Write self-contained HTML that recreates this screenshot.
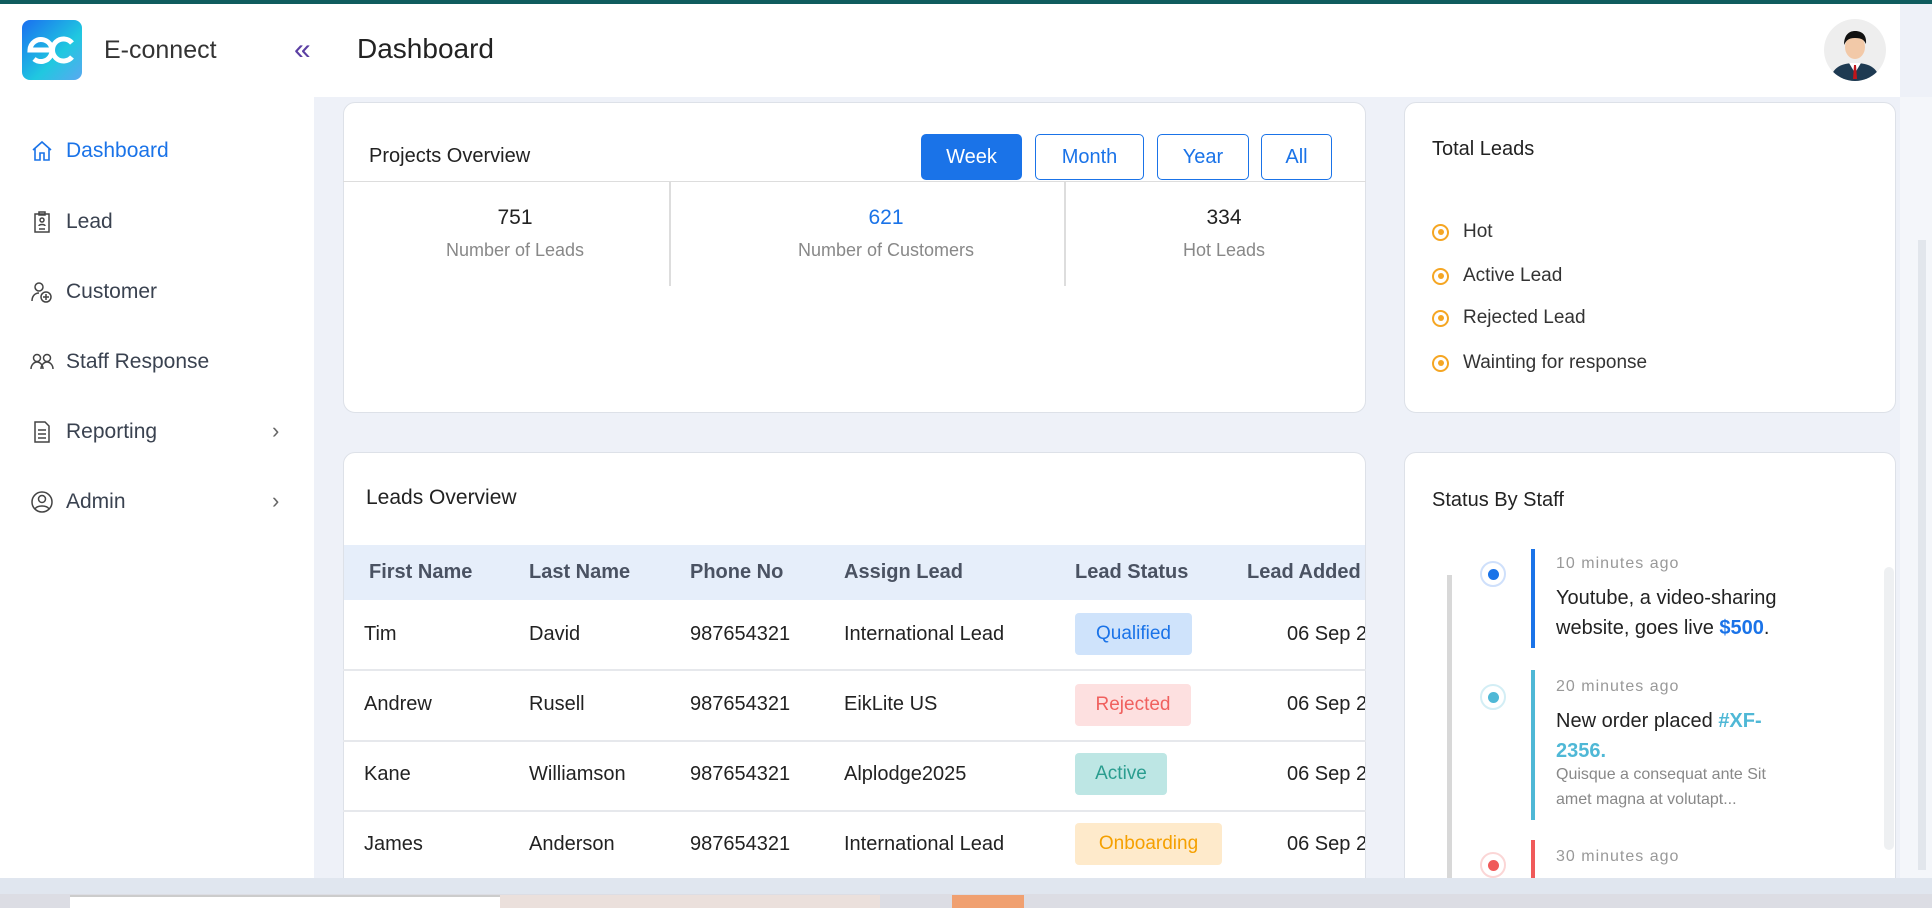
<!DOCTYPE html>
<html style="width:1932px;height:908px;overflow:hidden"><head><meta charset="utf-8"><style>
*{box-sizing:border-box;margin:0;padding:0}
body{width:1932px;height:908px;overflow:hidden;background:#eef1f8;font-family:"Liberation Sans",sans-serif;position:relative;color:#222}
.abs{position:absolute}
.topline{left:0;top:0;width:1932px;height:4px;background:#0f5c5e}
.header{left:0;top:4px;width:1900px;height:93px;background:#fff}
.sidebar{left:0;top:97px;width:314px;height:781px;background:#fff}
.menu{position:absolute;left:30px;font-size:21px;color:#3a4250;display:flex;align-items:center;gap:12px}
.menu svg{width:24px;height:24px}
.chev{position:absolute;left:272px;font-size:22px;color:#666}
.card{position:absolute;background:#fff;border:1px solid #dde1e8;border-radius:12px}
.btn{position:absolute;top:134px;height:46px;border:1.5px solid #1a73e8;border-radius:5px;color:#1a73e8;font-size:20px;display:flex;align-items:center;justify-content:center}
.stat{position:absolute;text-align:center;width:300px}
.stat .n{font-size:21px;color:#222}
.stat .l{font-size:18px;color:#888;margin-top:10px}
.li{position:absolute;left:1432px;font-size:19px;color:#333;display:flex;align-items:center;gap:14px}
.ring{width:17px;height:17px;border:2.5px solid #f5a623;border-radius:50%;display:flex;align-items:center;justify-content:center}
.ring i{width:6px;height:6px;background:#f5a623;border-radius:50%}
.th{position:absolute;top:561px;font-size:20px;color:#4a5262;font-weight:bold}
.td{position:absolute;font-size:20px;color:#222}
.badge{position:absolute;left:1075px;height:42px;border-radius:4px;font-size:19px;display:flex;align-items:center;justify-content:center}
.sep{position:absolute;left:343px;width:1023px;height:2px;background:#e6e8ec}
.dot{position:absolute;left:1480px;width:26px;height:26px;border-radius:50%;border:2px solid;display:flex;align-items:center;justify-content:center}
.dot i{width:11px;height:11px;border-radius:50%}
.bar{position:absolute;left:1531px;width:4px}
.tm{position:absolute;left:1556px;font-size:16px;color:#999;letter-spacing:1px}
.tx{position:absolute;left:1556px;font-size:20px;color:#222;line-height:30px;width:290px}
</style></head><body>
<div class="abs topline"></div>
<div class="abs header"></div>
<div class="abs" style="left:22px;top:20px;width:60px;height:60px;border-radius:8px;background:linear-gradient(135deg,#1a6ff0,#20c8e0 60%,#5aa8f0)">
<svg width="60" height="60" viewBox="0 0 60 60"><path d="M30 30H8a11 11 0 1 1 4 9" fill="none" stroke="#fff" stroke-width="5"/><path d="M50 23a11 11 0 1 0 0 14" fill="none" stroke="#fff" stroke-width="5"/></svg></div>
<div class="abs" style="left:104px;top:36px;font-size:25px;color:#333">E-connect</div>
<div class="abs" style="left:294px;top:33px;font-size:30px;color:#5b3fa3">«</div>
<div class="abs" style="left:357px;top:33px;font-size:28px;color:#222">Dashboard</div>
<div class="abs" style="left:1824px;top:19px;width:62px;height:62px;border-radius:50%;background:#eee;overflow:hidden">
<svg width="62" height="62" viewBox="0 0 62 62"><path d="M6 62c2-14 12-18 25-18s23 4 25 18z" fill="#1e3a52"/><path d="M25 44l6 10 6-10z" fill="#fff"/><path d="M30 46h2l1 14h-4z" fill="#c0151b"/><ellipse cx="31" cy="28" rx="10" ry="12" fill="#f2c9a8"/><path d="M20 26c0-10 5-14 11-14s12 3 11 13c-2-4-4-6-11-6s-9 3-11 7z" fill="#111"/></svg></div>
<div class="abs sidebar"></div>
<div class="menu" style="top:139px;color:#1a73e8"><svg viewBox="0 0 24 24" fill="none" stroke="#1a73e8" stroke-width="1.6"><path d="M3 11L12 3l9 8M5 9v12h5v-7h4v7h5V9"/></svg>Dashboard</div>
<div class="menu" style="top:210px"><svg viewBox="0 0 24 24" fill="none" stroke="#444" stroke-width="1.5"><rect x="5" y="4" width="14" height="18"/><rect x="9" y="2" width="6" height="3"/><circle cx="12" cy="10" r="2"/><path d="M9 16c0-2 6-2 6 0M9 19h6"/></svg>Lead</div>
<div class="menu" style="top:280px"><svg viewBox="0 0 24 24" fill="none" stroke="#444" stroke-width="1.5"><circle cx="9" cy="7" r="4"/><path d="M2 21c0-5 3-8 7-8"/><circle cx="16" cy="17" r="5"/><path d="M16 14v6M13 17h6"/></svg>Customer</div>
<div class="menu" style="top:350px"><svg viewBox="0 0 24 24" fill="none" stroke="#444" stroke-width="1.5"><circle cx="7" cy="8" r="3.5"/><circle cx="17" cy="8" r="3.5"/><path d="M1 19c0-4 3-7 6-7s6 3 6 7M11 19c0-4 3-7 6-7s6 3 6 7"/></svg>Staff Response</div>
<div class="menu" style="top:420px"><svg viewBox="0 0 24 24" fill="none" stroke="#444" stroke-width="1.5"><path d="M5 2h10l4 4v16H5z"/><path d="M8 10h8M8 14h8M8 18h8"/></svg>Reporting</div>
<div class="chev" style="top:418px">›</div>
<div class="menu" style="top:490px"><svg viewBox="0 0 24 24" fill="none" stroke="#444" stroke-width="1.5"><circle cx="12" cy="12" r="10"/><circle cx="12" cy="9" r="3.5"/><path d="M5 19c2-4 12-4 14 0"/></svg>Admin</div>
<div class="chev" style="top:488px">›</div>

<div class="card" style="left:343px;top:102px;width:1023px;height:311px"></div>
<div class="abs" style="left:369px;top:145px;font-size:20px;color:#222">Projects Overview</div>
<div class="btn" style="left:921px;width:101px;background:#1a73e8;color:#fff">Week</div>
<div class="btn" style="left:1035px;width:109px">Month</div>
<div class="btn" style="left:1157px;width:92px">Year</div>
<div class="btn" style="left:1261px;width:71px">All</div>
<div class="abs" style="left:343px;top:181px;width:1023px;height:1px;background:#ddd"></div>
<div class="abs" style="left:669px;top:181px;width:2px;height:105px;background:#ddd"></div>
<div class="abs" style="left:1064px;top:181px;width:2px;height:105px;background:#ddd"></div>
<div class="stat" style="left:365px;top:206px"><div class="n">751</div><div class="l">Number of Leads</div></div>
<div class="stat" style="left:736px;top:206px"><div class="n" style="color:#1a73e8">621</div><div class="l">Number of Customers</div></div>
<div class="stat" style="left:1074px;top:206px"><div class="n">334</div><div class="l">Hot Leads</div></div>

<div class="card" style="left:1404px;top:102px;width:492px;height:311px"></div>
<div class="abs" style="left:1432px;top:138px;font-size:20px;color:#222">Total Leads</div>
<div class="li" style="top:221px"><span class="ring"><i></i></span>Hot</div>
<div class="li" style="top:265px"><span class="ring"><i></i></span>Active Lead</div>
<div class="li" style="top:307px"><span class="ring"><i></i></span>Rejected Lead</div>
<div class="li" style="top:352px"><span class="ring"><i></i></span>Wainting for response</div>

<div class="card" style="left:343px;top:452px;width:1023px;height:440px"></div>
<div class="abs" style="left:366px;top:486px;font-size:21px;color:#222">Leads Overview</div>
<div class="abs" style="left:344px;top:545px;width:1021px;height:55px;background:#e6eefa"></div>
<div class="th" style="left:369px">First Name</div>
<div class="th" style="left:529px">Last Name</div>
<div class="th" style="left:690px">Phone No</div>
<div class="th" style="left:844px">Assign Lead</div>
<div class="th" style="left:1075px">Lead Status</div>
<div class="th" style="left:1247px;width:118px;overflow:hidden;white-space:nowrap">Lead Added</div>
<div class="sep" style="top:669px"></div><div class="sep" style="top:740px"></div><div class="sep" style="top:810px"></div>
<div class="td" style="left:364px;top:623px">Tim</div><div class="td" style="left:529px;top:623px">David</div><div class="td" style="left:690px;top:623px">987654321</div><div class="td" style="left:844px;top:623px">International Lead</div>
<div class="badge" style="top:613px;width:117px;background:#cfe3fb;color:#1a73e8">Qualified</div>
<div class="td" style="left:1287px;top:623px;width:78px;overflow:hidden;white-space:nowrap">06 Sep 2025</div>
<div class="td" style="left:364px;top:693px">Andrew</div><div class="td" style="left:529px;top:693px">Rusell</div><div class="td" style="left:690px;top:693px">987654321</div><div class="td" style="left:844px;top:693px">EikLite US</div>
<div class="badge" style="top:684px;width:116px;background:#fde0e0;color:#f0605e">Rejected</div>
<div class="td" style="left:1287px;top:693px;width:78px;overflow:hidden;white-space:nowrap">06 Sep 2025</div>
<div class="td" style="left:364px;top:763px">Kane</div><div class="td" style="left:529px;top:763px">Williamson</div><div class="td" style="left:690px;top:763px">987654321</div><div class="td" style="left:844px;top:763px">Alplodge2025</div>
<div class="badge" style="top:753px;width:92px;background:#bde6e4;color:#2a9d8f">Active</div>
<div class="td" style="left:1287px;top:763px;width:78px;overflow:hidden;white-space:nowrap">06 Sep 2025</div>
<div class="td" style="left:364px;top:833px">James</div><div class="td" style="left:529px;top:833px">Anderson</div><div class="td" style="left:690px;top:833px">987654321</div><div class="td" style="left:844px;top:833px">International Lead</div>
<div class="badge" style="top:823px;width:147px;background:#feeacb;color:#f5a000">Onboarding</div>
<div class="td" style="left:1287px;top:833px;width:78px;overflow:hidden;white-space:nowrap">06 Sep 2025</div>

<div class="card" style="left:1404px;top:452px;width:492px;height:440px"></div>
<div class="abs" style="left:1432px;top:489px;font-size:20px;color:#222">Status By Staff</div>
<div class="abs" style="left:1447px;top:575px;width:5px;height:310px;background:#d8d8d8"></div>
<div class="dot" style="top:561px;border-color:#cfe0fb"><i style="background:#1a73e8"></i></div>
<div class="dot" style="top:684px;border-color:#d3eef5"><i style="background:#4fb8d6"></i></div>
<div class="dot" style="top:852px;border-color:#fbd6d6"><i style="background:#f05a5a"></i></div>
<div class="bar" style="top:549px;height:99px;background:#1a73e8"></div>
<div class="bar" style="top:670px;height:150px;background:#4fb8d6"></div>
<div class="bar" style="top:840px;height:40px;background:#f05a5a"></div>
<div class="tm" style="top:555px">10 minutes ago</div>
<div class="tx" style="top:583px">Youtube, a video-sharing website, goes live <b style="color:#1a73e8">$500</b>.</div>
<div class="tm" style="top:678px">20 minutes ago</div>
<div class="tx" style="top:706px;width:240px">New order placed <b style="color:#4fb8d6">#XF-2356.</b></div>
<div class="abs" style="left:1556px;top:762px;font-size:16px;color:#888;line-height:25px;width:240px">Quisque a consequat ante Sit amet magna at volutapt...</div>
<div class="tm" style="top:848px">30 minutes ago</div>
<div class="abs" style="left:1884px;top:567px;width:10px;height:283px;background:#eef0f2;border-radius:5px"></div>
<div class="abs" style="left:1900px;top:97px;width:32px;height:781px;background:#f4f6fa"></div>
<div class="abs" style="left:1918px;top:240px;width:8px;height:630px;background:#e2e6ec"></div>
<div class="abs" style="left:0;top:878px;width:1932px;height:16px;background:#e0e6ef"></div>
<div class="abs" style="left:0;top:894px;width:1932px;height:14px;background:#dcdde4"></div>
<div class="abs" style="left:70px;top:895px;width:430px;height:13px;background:#fff;border-top:2px solid #ccc"></div>
<div class="abs" style="left:500px;top:895px;width:380px;height:13px;background:#ebe0dc"></div>
<div class="abs" style="left:952px;top:895px;width:72px;height:13px;background:#f0a070"></div>
</body></html>
